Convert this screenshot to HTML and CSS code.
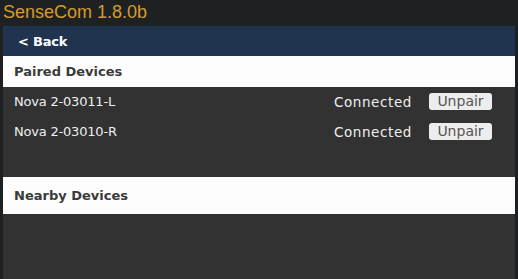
FILE: index.html
```html
<!DOCTYPE html>
<html>
<head>
<meta charset="utf-8">
<link rel="stylesheet" href="styles.css">
</head>
<body>
<div class="app">
  <div class="title">SenseCom 1.8.0b</div>
  <div class="panel">
    <div class="nav"><span class="back">&lt; Back</span></div>
    <div class="section-head">Paired Devices</div>
    <div class="list">
      <div class="row">
        <span class="name">Nova 2-03011-L</span>
        <span class="status">Connected</span>
        <button class="unpair">Unpair</button>
      </div>
      <div class="row">
        <span class="name">Nova 2-03010-R</span>
        <span class="status">Connected</span>
        <button class="unpair">Unpair</button>
      </div>
    </div>
    <div class="section-head nearby">Nearby Devices</div>
    <div class="rest"></div>
  </div>
</div>
</body>
</html>
```
FILE: styles.css
```css
html, body {
  margin: 0;
  padding: 0;
  background: #1e2122;
  width: 518px;
  height: 279px;
  overflow: hidden;
}
.app {
  display: flex;
  flex-direction: column;
  height: 279px;
}
.title {
  height: 26px;
  line-height: 24px;
  padding-left: 3px;
  color: #d89b2b;
  font-family: "Liberation Sans", Arial, sans-serif;
  font-size: 18px;
}
.panel {
  flex: 1;
  margin: 0 3px;
  background: #323232;
  display: flex;
  flex-direction: column;
  font-family: "DejaVu Sans", sans-serif;
}
.nav {
  height: 30px;
  background: #20344f;
  display: flex;
  align-items: center;
  padding-left: 15px;
}
.back {
  color: #ffffff;
  font-weight: 700;
  font-size: 13px;
  letter-spacing: -0.2px;
}
.section-head {
  height: 31px;
  background: #fdfdfd;
  display: flex;
  align-items: center;
  padding-left: 11px;
  color: #3a3a3a;
  font-weight: 700;
  font-size: 13px;
}
.list {
  height: 90px;
  display: flex;
  flex-direction: column;
  gap: 1px;
}
.row {
  height: 29px;
  display: flex;
  align-items: center;
  padding-left: 11px;
  color: #efefef;
  font-size: 13px;
}
.name {
  flex: 1;
  letter-spacing: -0.2px;
}
.status {
  margin-right: 17px;
  font-size: 13.5px;
  letter-spacing: 0.6px;
}
.unpair {
  width: 63px;
  height: 17px;
  margin-right: 23px;
  padding: 0;
  border: none;
  border-radius: 3px;
  background: #ededed;
  color: #555555;
  font-family: "DejaVu Sans", sans-serif;
  font-size: 14px;
  line-height: 17px;
}
.nearby {
  height: 37px;
}
.rest {
  flex: 1;
}
```
